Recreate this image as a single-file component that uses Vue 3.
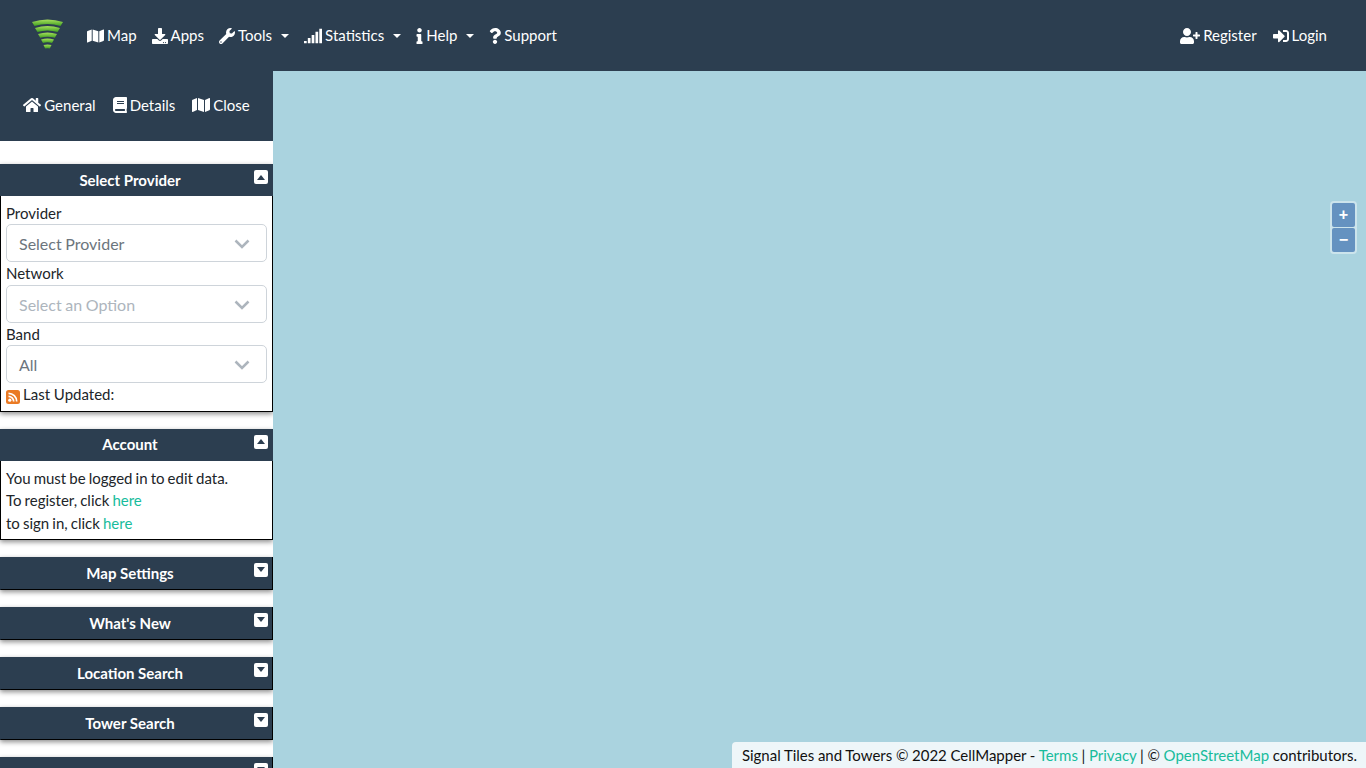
<template>
  <div class="page">
    <nav class="navbar">
      <a class="brand" href="#">
        <svg class="logo" viewBox="0 0 33 32" width="33" height="32">
          <defs>
            <linearGradient id="wifi" x1="0" y1="0" x2="0" y2="1">
              <stop offset="0" stop-color="#a8e05c" />
              <stop offset="1" stop-color="#3f9e22" />
            </linearGradient>
          </defs>
          <path d="M1 4Q16.500-1 32 4L29.500 8Q16.500 3.800 3.500 8Z" fill="url(#wifi)" />
          <path d="M4 10Q16.500 6 29 10L26.500 14Q16.500 10.800 6.500 14Z" fill="url(#wifi)" />
          <path d="M7 16Q16.500 12.800 26 16L23.800 19.800Q16.500 17.500 9.200 19.800Z" fill="url(#wifi)" />
          <path d="M10 21.500Q16.500 19.500 23 21.500L21 25Q16.500 23.700 12 25Z" fill="url(#wifi)" />
          <path d="M12.500 27Q16.500 25.800 20.500 27L18.800 30.500Q16.500 29.800 14.200 30.500Z" fill="url(#wifi)" />
        </svg>
      </a>
      <ul class="nav-list">
        <li v-for="item in mainNav" :key="item.label" class="nav-item">
          <svg class="icon" :viewBox="icons[item.icon].box" :style="{ width: item.w + 'px' }">
            <path :d="icons[item.icon].d" />
          </svg>
          <span>{{ item.label }}</span>
          <i v-if="item.caret" class="caret"></i>
        </li>
      </ul>
      <ul class="nav-list nav-right">
        <li v-for="item in userNav" :key="item.label" class="nav-item">
          <svg class="icon" :viewBox="icons[item.icon].box" :style="{ width: item.w + 'px' }">
            <path :d="icons[item.icon].d" />
          </svg>
          <span>{{ item.label }}</span>
        </li>
      </ul>
    </nav>

    <div class="main">
      <aside class="sidebar">
        <ul class="subnav">
          <li v-for="item in subNav" :key="item.label" class="nav-item">
            <svg class="icon" :viewBox="icons[item.icon].box" :style="{ width: item.w + 'px' }">
              <path :d="icons[item.icon].d" />
            </svg>
            <span>{{ item.label }}</span>
          </li>
        </ul>

        <section class="panel first">
          <header class="panel-head">
            <span>Select Provider</span>
            <button class="toggle"><i class="tri up"></i></button>
          </header>
          <div class="panel-body">
            <template v-for="field in fields" :key="field.label">
              <label>{{ field.label }}</label>
              <div class="select" :class="field.cls">
                <span>{{ field.value }}</span>
                <svg class="chevron" viewBox="0 0 16 10" width="16" height="10">
                  <path d="M1.500 1.500 8 8l6.500-6.500" />
                </svg>
              </div>
            </template>
            <div class="updated">
              <svg class="rss" viewBox="0 0 14 14" width="14" height="14">
                <rect width="14" height="14" rx="2.500" fill="#ea7a24" />
                <circle cx="3.800" cy="10.200" r="1.600" fill="#fff" />
                <path d="M2.500 6.300a5.200 5.200 0 0 1 5.200 5.200M2.500 3.300a8.200 8.200 0 0 1 8.200 8.200" fill="none" stroke="#fff" stroke-width="1.700" />
              </svg>
              Last Updated:
            </div>
          </div>
        </section>

        <section class="panel">
          <header class="panel-head">
            <span>Account</span>
            <button class="toggle"><i class="tri up"></i></button>
          </header>
          <div class="panel-body account">
            You must be logged in to edit data.<br />
            To register, click <a href="#">here</a><br />
            to sign in, click <a href="#">here</a>
          </div>
        </section>

        <section v-for="(title, i) in collapsed" :key="i" class="panel closed">
          <header class="panel-head">
            <span>{{ title }}</span>
            <button class="toggle"><i class="tri down"></i></button>
          </header>
        </section>
      </aside>

      <div class="map">
        <div class="zoom">
          <button>+</button>
          <button>−</button>
        </div>
        <div class="attribution">
          Signal Tiles and Towers © 2022 CellMapper - <a href="#">Terms</a> | <a href="#">Privacy</a> | © <a href="#">OpenStreetMap</a> contributors.
        </div>
      </div>
    </div>
  </div>
</template>

<script setup>
const icons = {
  map: {
    box: '0 0 576 512',
    d: 'M0 117.66v346.32c0 11.32 11.43 19.06 21.94 14.86L160 416V32L20.12 87.95A32.006 32.006 0 0 0 0 117.66zM192 416l192 64V96L192 32v384zM554.06 33.16L416 96v384l139.88-55.95A31.996 31.996 0 0 0 576 394.34V48.02c0-11.32-11.43-19.06-21.94-14.86z'
  },
  download: {
    box: '0 0 512 512',
    d: 'M216 0h80c13.3 0 24 10.7 24 24v168h87.7c17.8 0 26.7 21.5 14.1 34.1L269.7 378.3c-7.5 7.5-19.8 7.5-27.3 0L90.1 226.1c-12.6-12.6-3.7-34.1 14.1-34.1H192V24c0-13.3 10.7-24 24-24zm296 376v112c0 13.3-10.7 24-24 24H24c-13.3 0-24-10.7-24-24V376c0-13.3 10.7-24 24-24h146.7l49 49c20.1 20.1 52.5 20.1 72.6 0l49-49H488c13.3 0 24 10.7 24 24zm-124 88c0-11-9-20-20-20s-20 9-20 20 9 20 20 20 20-9 20-20zm64 0c0-11-9-20-20-20s-20 9-20 20 9 20 20 20 20-9 20-20z'
  },
  wrench: {
    box: '0 0 512 512',
    d: 'M507.73 109.1c-2.24-9.03-13.54-12.09-20.12-5.51l-74.36 74.36-67.88-11.31-11.31-67.88 74.36-74.36c6.62-6.62 3.43-17.9-5.66-20.16-47.38-11.74-99.55.91-136.58 37.93-39.64 39.64-50.55 97.1-34.05 147.2L18.74 402.76c-24.99 24.99-24.99 65.51 0 90.5 24.99 24.99 65.51 24.99 90.5 0l213.21-213.21c50.12 16.71 107.47 5.68 147.37-34.22 37.07-37.07 49.7-89.32 37.91-136.73zM64 472c-13.25 0-24-10.75-24-24 0-13.26 10.75-24 24-24s24 10.74 24 24c0 13.25-10.75 24-24 24z'
  },
  signal: {
    box: '0 0 640 512',
    d: 'M0 432h96v80H0zM136 328h96v184h-96zM272 216h96v296h-96zM408 104h96v408h-96zM544 0h96v512h-96z'
  },
  info: {
    box: '0 0 192 512',
    d: 'M20 424.229h20V279.771H20c-11.046 0-20-8.954-20-20V212c0-11.046 8.954-20 20-20h112c11.046 0 20 8.954 20 20v212.229h20c11.046 0 20 8.954 20 20V492c0 11.046-8.954 20-20 20H20c-11.046 0-20-8.954-20-20v-47.771c0-11.046 8.954-20 20-20zM96 0C56.235 0 24 32.235 24 72s32.235 72 72 72 72-32.235 72-72S135.764 0 96 0z'
  },
  question: {
    box: '0 0 384 512',
    d: 'M202.021 0C122.202 0 70.503 32.703 29.914 91.026c-7.363 10.58-5.093 25.086 5.178 32.874l43.138 32.709c10.373 7.865 25.132 6.026 33.253-4.148 25.049-31.381 43.63-49.449 82.757-49.449 30.764 0 68.816 19.799 68.816 49.631 0 22.552-18.617 34.134-48.993 51.164-35.423 19.86-82.299 44.576-82.299 106.405V320c0 13.255 10.745 24 24 24h72.471c13.255 0 24-10.745 24-24v-5.773c0-42.86 125.268-44.645 125.268-160.627C377.504 66.256 286.902 0 202.021 0zM192 373.459c-38.196 0-69.271 31.075-69.271 69.271 0 38.195 31.075 69.27 69.271 69.27s69.271-31.075 69.271-69.271-31.075-69.27-69.271-69.27z'
  },
  userPlus: {
    box: '0 0 640 512',
    d: 'M624 208h-64v-64c0-8.8-7.2-16-16-16h-32c-8.8 0-16 7.2-16 16v64h-64c-8.8 0-16 7.2-16 16v32c0 8.8 7.2 16 16 16h64v64c0 8.8 7.2 16 16 16h32c8.8 0 16-7.2 16-16v-64h64c8.8 0 16-7.2 16-16v-32c0-8.8-7.2-16-16-16zm-400 48c70.7 0 128-57.3 128-128S294.7 0 224 0 96 57.3 96 128s57.3 128 128 128zm89.6 32h-16.7c-22.2 10.2-46.9 16-72.9 16s-50.6-5.8-72.9-16h-16.7C60.2 288 0 348.2 0 422.4V464c0 26.5 21.5 48 48 48h352c26.5 0 48-21.5 48-48v-41.6c0-74.2-60.2-134.4-134.4-134.4z'
  },
  signIn: {
    box: '0 0 512 512',
    d: 'M416 448h-84c-6.6 0-12-5.4-12-12v-40c0-6.6 5.4-12 12-12h84c17.7 0 32-14.3 32-32V160c0-17.7-14.3-32-32-32h-84c-6.6 0-12-5.4-12-12V76c0-6.6 5.4-12 12-12h84c53 0 96 43 96 96v192c0 53-43 96-96 96zm-47-201L201 79c-15-15-41-4.5-41 17v96H24c-13.3 0-24 10.7-24 24v96c0 13.3 10.7 24 24 24h136v96c0 21.5 26 32 41 17l168-168c9.3-9.4 9.3-24.6 0-34z'
  },
  home: {
    box: '0 0 576 512',
    d: 'M280.37 148.26L96 300.11V464a16 16 0 0 0 16 16l112.06-.29a16 16 0 0 0 15.92-16V368a16 16 0 0 1 16-16h64a16 16 0 0 1 16 16v95.64a16 16 0 0 0 16 16.05L464 480a16 16 0 0 0 16-16V300L295.67 148.26a12.19 12.19 0 0 0-15.3 0zM571.6 251.47L488 182.56V44.05a12 12 0 0 0-12-12h-56a12 12 0 0 0-12 12v72.61L318.47 43a48 48 0 0 0-61 0L4.34 251.47a12 12 0 0 0-1.6 16.9l25.5 31A12 12 0 0 0 45.15 301l235.22-193.74a12.19 12.19 0 0 1 15.3 0L530.9 301a12 12 0 0 0 16.9-1.6l25.5-31a12 12 0 0 0-1.7-16.93z'
  },
  book: {
    box: '0 0 448 512',
    d: 'M448 360V24c0-13.3-10.7-24-24-24H96C43 0 0 43 0 96v320c0 53 43 96 96 96h328c13.3 0 24-10.7 24-24v-16c0-7.5-3.5-14.3-8.9-18.7-4.2-15.4-4.2-59.3 0-74.7 5.4-4.3 8.9-11.1 8.9-18.6zM128 134c0-3.3 2.7-6 6-6h212c3.3 0 6 2.7 6 6v20c0 3.3-2.7 6-6 6H134c-3.3 0-6-2.7-6-6v-20zm0 64c0-3.3 2.7-6 6-6h212c3.3 0 6 2.7 6 6v20c0 3.3-2.7 6-6 6H134c-3.3 0-6-2.7-6-6v-20zm253.4 250H96c-17.7 0-32-14.3-32-32 0-17.6 14.4-32 32-32h285.4c-1.9 17.1-1.9 46.9 0 64z'
  }
}

const mainNav = [
  { label: 'Map', icon: 'map', w: 17 },
  { label: 'Apps', icon: 'download', w: 16 },
  { label: 'Tools', icon: 'wrench', w: 16, caret: true },
  { label: 'Statistics', icon: 'signal', w: 18, caret: true },
  { label: 'Help', icon: 'info', w: 7, caret: true },
  { label: 'Support', icon: 'question', w: 12 }
]

const userNav = [
  { label: 'Register', icon: 'userPlus', w: 20 },
  { label: 'Login', icon: 'signIn', w: 16 }
]

const subNav = [
  { label: 'General', icon: 'home', w: 18 },
  { label: 'Details', icon: 'book', w: 14 },
  { label: 'Close', icon: 'map', w: 18 }
]

const fields = [
  { label: 'Provider', value: 'Select Provider', cls: '' },
  { label: 'Network', value: 'Select an Option', cls: 'disabled' },
  { label: 'Band', value: 'All', cls: '' }
]

// last panel is cut off by the window, its title is below the fold
const collapsed = ['Map Settings', "What's New", 'Location Search', 'Tower Search', '']
</script>

<style>
html,
body {
  margin: 0;
  height: 100%;
  overflow: hidden;
}
</style>

<style scoped>
.page {
  width: 1366px;
  height: 768px;
  display: flex;
  flex-direction: column;
  overflow: hidden;
  font-family: Lato, "Liberation Sans", sans-serif;
  font-size: 15px;
  line-height: 22.5px;
  color: #212529;
}

.navbar {
  height: 71px;
  flex: none;
  display: flex;
  align-items: center;
  background: #2c3e50;
  padding: 0 31px;
  box-sizing: border-box;
}

.brand {
  display: flex;
  margin-right: 15.5px;
  margin-bottom: 3px;
}

.nav-list {
  list-style: none;
  display: flex;
  margin: 0;
  padding: 0;
}

.nav-right {
  margin-left: auto;
}

.nav-item {
  display: flex;
  align-items: center;
  padding: 0 7.5px;
  color: #fff;
  white-space: nowrap;
}

.nav-right .nav-item {
  padding: 0 8px;
}

.subnav .nav-item {
  padding: 0 8.5px;
}

.icon {
  height: 16px;
  margin-right: 3px;
  fill: #fff;
  flex: none;
}

.caret {
  margin-left: 9px;
  border-top: 4.5px solid #fff;
  border-left: 4.5px solid transparent;
  border-right: 4.5px solid transparent;
}

.main {
  flex: 1;
  display: flex;
  min-height: 0;
}

.sidebar {
  width: 273px;
  flex: none;
  background: #fff;
  overflow: hidden;
}

.subnav {
  list-style: none;
  height: 70px;
  box-sizing: border-box;
  margin: 0;
  padding: 0 0 2px;
  display: flex;
  align-items: center;
  justify-content: center;
  background: #2c3e50;
}

.panel {
  margin-bottom: 17px;
  box-shadow: 0 2px 5px rgba(0, 0, 0, 0.45);
}

.panel.first {
  margin-top: 23px;
}

.panel-head {
  position: relative;
  height: 32px;
  padding-right: 13px;
  display: flex;
  align-items: center;
  justify-content: center;
  background: #2c3e50;
  color: #fff;
  font-weight: 700;
}

.closed .panel-head {
  height: 33px;
  box-sizing: border-box;
  border: 1px solid #000;
  border-top: 0;
  border-left-color: #2c3e50;
  padding-top: 1px;
}

.toggle {
  position: absolute;
  top: 6px;
  right: 5px;
  width: 14px;
  height: 14px;
  padding: 0;
  border: 0;
  border-radius: 2px;
  background: #fff;
  display: flex;
  align-items: center;
  justify-content: center;
}

.closed .toggle {
  right: 4px;
}

.tri {
  border-left: 4.5px solid transparent;
  border-right: 4.5px solid transparent;
}

.tri.up {
  border-bottom: 5px solid #2c3e50;
}

.tri.down {
  border-top: 5px solid #2c3e50;
}

.panel-body {
  background: #fff;
  border: 1px solid #000;
  border-top: 0;
  padding: 5.6px 5px 5px;
}

.panel-body label {
  display: block;
}

.select {
  height: 38px;
  box-sizing: border-box;
  border: 1px solid #ced4da;
  border-radius: 5px;
  padding: 3px 16px 0 12px;
  display: flex;
  align-items: center;
  justify-content: space-between;
  color: #6c757d;
  font-size: 16px;
  word-spacing: -0.5px;
}

.select.disabled {
  color: #adb5bd;
}

.chevron {
  margin-top: -1px;
  fill: none;
  stroke: #adb5bd;
  stroke-width: 2.500;
}

.updated {
  display: flex;
  align-items: center;
  gap: 3px;
}

.rss {
  margin-top: 5px;
}

.panel-body.account {
  padding-top: 6.3px;
  padding-bottom: 4.6px;
  word-spacing: -0.75px;
}

a {
  color: #18bc9c;
  text-decoration: none;
}

.map {
  flex: 1;
  position: relative;
  background: #aad3df;
}

.zoom {
  position: absolute;
  top: 130px;
  right: 9px;
  padding: 2px;
  border-radius: 4px;
  background: rgba(255, 255, 255, 0.4);
  display: flex;
  flex-direction: column;
  gap: 1px;
}

.zoom button {
  width: 23px;
  height: 24px;
  padding: 0;
  border: 0;
  border-radius: 2px;
  background: #6592c0;
  color: #fff;
  font-family: "Liberation Sans", sans-serif;
  font-size: 16px;
  font-weight: 700;
  line-height: 24px;
}

.attribution {
  position: absolute;
  right: 0;
  bottom: 0;
  padding: 2px 9px 2px 10px;
  border-radius: 4px 0 0 0;
  background: rgba(255, 255, 255, 0.8);
  color: #111;
  white-space: nowrap;
  word-spacing: -0.2px;
}
</style>
